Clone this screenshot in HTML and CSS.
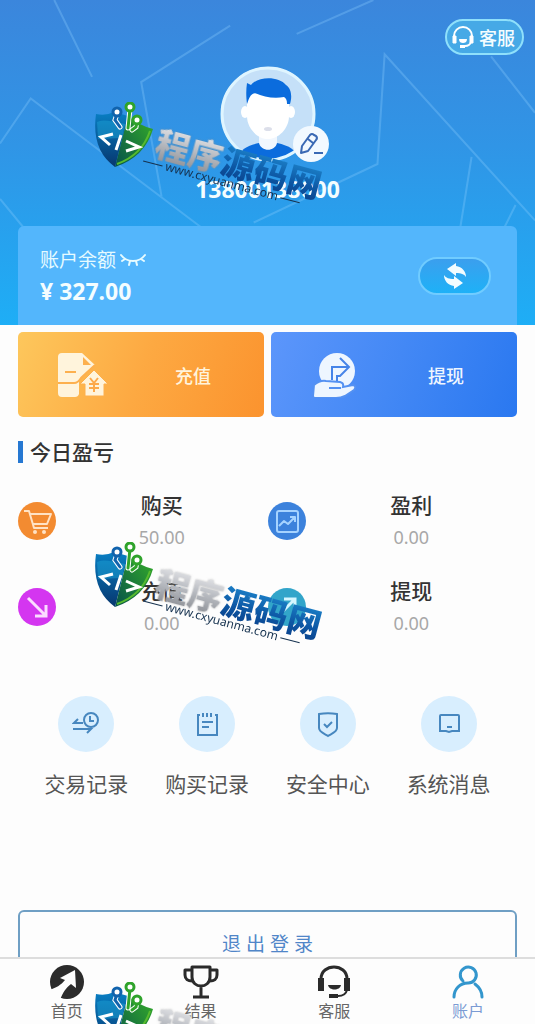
FILE: index.html
```html
<!DOCTYPE html>
<html lang="zh-CN">
<head>
    <meta charset="UTF-8">
    <meta name="viewport" content="width=device-width, initial-scale=1.0">
    <title>账户</title>
    <link rel="stylesheet" href="styles.css">
</head>
<body>

    <div class="page">

        <!-- Header -->
        <header class="header">
            <svg class="header-lines" viewBox="0 0 523 317" preserveAspectRatio="none" aria-hidden="true">
                <path d="M53 0 90 75M225 25 138 80 158 192M365 0 290 33M0 140 30 96 205 228M523 215 376 53 369 160 248 217M461 153 449 228M0 194 28 228M480 55 523 110M504 200 490 228"/>
            </svg>

            <div class="header-top">
                <a class="service-link" href="#service">
                    <svg width="24" height="24" viewBox="0 0 24 24" fill="none" stroke="#fff" stroke-width="2" aria-hidden="true">
                        <path d="M3 14V11a9 9 0 0 1 18 0v3M20 17c-1 3-3 4-6 4"/>
                        <path d="M2 11h3v7H2zM19 11h3v7h-3z" fill="#fff" stroke-width="1"/>
                        <path d="M8 14h8c0 3-2 4-4 4s-4-1-4-4zM9 20h5v3H9z" fill="#fff" stroke="none"/>
                    </svg>
                    客服
                </a>
            </div>

            <div class="avatar">
                <svg class="avatar-picture" viewBox="0 0 96 96" aria-hidden="true">
                    <defs>
                        <clipPath id="avatarClip"><circle cx="48" cy="48" r="46"/></clipPath>
                    </defs>
                    <circle cx="48" cy="48" r="47" fill="#c5e0f8"/>
                    <g clip-path="url(#avatarClip)">
                        <path d="M18 96c0-12 8-16 21-19h18c13 3 21 7 21 19z" fill="#0b6cdd"/>
                        <path d="M39 64h18v13c-2 9-16 9-18 0z" fill="#f1f7fe"/>
                        <ellipse cx="25" cy="46" rx="4" ry="6" fill="#fff"/>
                        <ellipse cx="71" cy="46" rx="4" ry="6" fill="#fff"/>
                        <path d="M27 28h42v22c0 13-11 23-21 23S27 63 27 50z" fill="#fff"/>
                        <path d="M27 38c-1-8-1-14 0-21l4 2c7-9 28-9 35 0 6 4 6 13 4 19h-3c0-4-1-6-3-7-10 2-20 0-29-4-5 1-6 6-8 11z" fill="#0b6cdd"/>
                        <ellipse cx="48" cy="63" rx="4" ry="2" fill="#dcdfea"/>
                    </g>
                    <circle cx="48" cy="48" r="46" fill="none" stroke="#dff5ff" stroke-width="3"/>
                </svg>
                <button class="avatar-edit" type="button" aria-label="编辑头像">
                    <svg width="26" height="26" viewBox="0 0 26 26" fill="none" stroke="#3a69b4" stroke-width="2" stroke-linejoin="round" aria-hidden="true">
                        <path d="M3 22 4 15 12 4q2-2 4 0l2 1q2 2 0 4l-8 11zM10 8l5 4M16 22h9"/>
                    </svg>
                </button>
            </div>

            <p class="phone">13800138000</p>

            <div class="balance">
                <div>
                    <p class="balance-label">
                        账户余额
                        <button class="eye-button" type="button" aria-label="显示余额">
                            <svg width="26" height="14" viewBox="0 0 26 14" fill="none" stroke="#e6fbff" stroke-width="2" stroke-linecap="round" aria-hidden="true">
                                <path d="M1 2c6 8 18 8 24 0M5 6 2 8M10 8l-1 4M16 8l1 4M21 6l3 2"/>
                            </svg>
                        </button>
                    </p>
                    <p class="balance-amount">¥ 327.00</p>
                </div>
                <button class="refresh-button" type="button" aria-label="刷新余额">
                    <svg width="26" height="28" viewBox="0 0 26 28" fill="#f2fcff" aria-hidden="true">
                        <path d="M5 7 14 1v3c6 1 10 5 10 11-2-3-5-4-10-4v3z"/>
                        <path d="M21 21 12 27v-3C6 23 2 19 2 13c2 3 5 4 10 4v-3z"/>
                    </svg>
                </button>
            </div>
        </header>

        <main class="content">
            <!-- Recharge and withdraw -->
            <div class="actions">
                <a class="action action-recharge" href="#recharge">
                    <svg width="50" height="46" viewBox="0 0 50 46" aria-hidden="true">
                        <path d="M5 1h20l13 12-16 15v14q-1 3-4 3H5q-4 0-4-4V5q0-4 4-4z" fill="#fff4dc"/>
                        <path d="M26 5v8h8z" fill="#fdb04e"/>
                        <path d="M8 20h11M1 31h16q4 0 7-5L38 13" fill="none" stroke="#fdb04e" stroke-width="2"/>
                        <path d="M37 18 51 32h-4v12H28V32h-5z" fill="#fff4dc" stroke="#fdb04e"/>
                        <path d="M33 26l4 5 4-5M32 32h10M32 36h10M37 31v9" fill="none" stroke="#fda94a" stroke-width="2"/>
                    </svg>
                    充值
                </a>
                <a class="action action-withdraw" href="#withdraw">
                    <svg width="50" height="46" viewBox="0 0 50 46" aria-hidden="true">
                        <circle cx="27" cy="19" r="18" fill="#eef6ff"/>
                        <path d="M22 28V15h17M30 6l9 9-9 9h-3v6" fill="none" stroke="#4684e8" stroke-width="2"/>
                        <path d="M4 33q6-5 12-4l14 1q4 1 3 5l10-2q4 1 1 5l-9 6q-4 2-9 2H5q-2 0-2-2z" fill="#eef6ff" stroke="#5491f2" stroke-width="2"/>
                        <path d="M19 36h12" stroke="#5491f2" stroke-width="2"/>
                    </svg>
                    提现
                </a>
            </div>

            <!-- Today's profit and loss -->
            <h2 class="section-title">今日盈亏</h2>
            <div class="stats">
                <div class="stat">
                    <svg class="stat-icon" viewBox="0 0 38 38" aria-hidden="true">
                        <circle cx="19" cy="19" r="19" fill="#f38b31"/>
                        <g fill="none" stroke="#ffe2c4" stroke-width="2" stroke-linejoin="round">
                            <path d="M6 9h5l5 17h14M12 12h21l-4 10H15"/>
                        </g>
                        <circle cx="17" cy="30" r="2" fill="#ffe2c4"/>
                        <circle cx="26" cy="30" r="2" fill="#ffe2c4"/>
                    </svg>
                    <div class="stat-text">
                        <p class="stat-name">购买</p>
                        <p class="stat-value">50.00</p>
                    </div>
                </div>
                <div class="stat">
                    <svg class="stat-icon" viewBox="0 0 38 38" aria-hidden="true">
                        <circle cx="19" cy="19" r="19" fill="#3c82dc"/>
                        <g fill="none" stroke="#a6d3ff" stroke-width="2" stroke-linejoin="round">
                            <rect x="9" y="9" width="21" height="21" rx="2"/>
                            <path d="M11 24l5-5 4 3 6-6M22 15h5v5"/>
                        </g>
                    </svg>
                    <div class="stat-text">
                        <p class="stat-name">盈利</p>
                        <p class="stat-value">0.00</p>
                    </div>
                </div>
                <div class="stat">
                    <svg class="stat-icon" viewBox="0 0 38 38" aria-hidden="true">
                        <circle cx="19" cy="19" r="19" fill="#d436f0"/>
                        <path d="M10 10 27 27M28 17v11H17" fill="none" stroke="#fbdcff" stroke-width="3"/>
                    </svg>
                    <div class="stat-text">
                        <p class="stat-name">充值</p>
                        <p class="stat-value">0.00</p>
                    </div>
                </div>
                <div class="stat">
                    <svg class="stat-icon" viewBox="0 0 38 38" aria-hidden="true">
                        <circle cx="19" cy="19" r="19" fill="#32a5ca"/>
                        <path d="M11 27 27 11M16 11h11v11" fill="none" stroke="#d5f6ff" stroke-width="3"/>
                    </svg>
                    <div class="stat-text">
                        <p class="stat-name">提现</p>
                        <p class="stat-value">0.00</p>
                    </div>
                </div>
            </div>

            <!-- Shortcuts -->
            <nav class="shortcuts">
                <a class="shortcut" href="#trades">
                    <span class="shortcut-icon">
                        <svg width="28" height="28" viewBox="0 0 28 28" aria-hidden="true">
                            <circle cx="19" cy="10" r="7"/>
                            <path d="M18 6v5h4M11 13H2l4-4M1 19h18l-4 4"/>
                        </svg>
                    </span>
                    交易记录
                </a>
                <a class="shortcut" href="#purchases">
                    <span class="shortcut-icon">
                        <svg width="28" height="28" viewBox="0 0 28 28" aria-hidden="true">
                            <path d="M7 5H5v20h19V5h-2M10 3v4M14 3v4M18 3v4M9 12h11M9 17h7"/>
                        </svg>
                    </span>
                    购买记录
                </a>
                <a class="shortcut" href="#security">
                    <span class="shortcut-icon">
                        <svg width="28" height="28" viewBox="0 0 28 28" aria-hidden="true">
                            <path d="M5 4c6-1 12-1 18 0v14c0 4-6 6-9 8-3-2-9-4-9-8zM10 14l3 3 5-5"/>
                        </svg>
                    </span>
                    安全中心
                </a>
                <a class="shortcut" href="#messages">
                    <span class="shortcut-icon">
                        <svg width="28" height="28" viewBox="0 0 28 28" aria-hidden="true">
                            <path d="M6 5h17q1 0 1 1v15h-7l-3 1-3-1H5V6q0-1 1-1zM12 17h5"/>
                        </svg>
                    </span>
                    系统消息
                </a>
            </nav>

            <button class="logout-button" type="button">退 出 登 录</button>
        </main>

        <!-- Bottom tab bar -->
        <nav class="tabbar">
            <a class="tab" href="#home">
                <svg width="36" height="36" viewBox="0 0 36 36" aria-hidden="true">
                    <circle cx="18" cy="18" r="17" fill="#2b2b2b"/>
                    <path d="M26 6 27 24 22 20C17 24 14 28 11 36L0 26C7 24 12 21 16 16L11 14z" fill="#fdfdfd"/>
                </svg>
                首页
            </a>
            <a class="tab" href="#result">
                <svg width="36" height="36" viewBox="0 0 36 36" fill="none" stroke="#2b2b2b" stroke-width="3" stroke-linejoin="round" aria-hidden="true">
                    <path d="M9 3h18v10c0 12-18 12-18 0zM9 6H2v5c0 4 3 6 7 6M27 6h7v5c0 4-3 6-7 6M18 22v10M10 33h16"/>
                </svg>
                结果
            </a>
            <a class="tab" href="#service">
                <svg width="36" height="36" viewBox="0 0 36 36" fill="none" stroke="#2b2b2b" stroke-width="3" aria-hidden="true">
                    <path d="M5 15C5-1 31-1 31 15"/>
                    <path d="M31 26c-1 4-5 6-9 6" stroke-width="2"/>
                    <path d="M3 15h4v11H3zM29 15h4v11h-4zM14 31h7v2h-7z" fill="#2b2b2b" stroke-width="2"/>
                    <path d="M12 21h13c-1 6-12 6-13 0z" fill="#2b2b2b" stroke="none"/>
                </svg>
                客服
            </a>
            <a class="tab tab-active" href="#account">
                <svg width="36" height="36" viewBox="0 0 36 36" fill="none" stroke="#3396cd" stroke-width="3" stroke-linecap="round" aria-hidden="true">
                    <path d="M13 17a8 8 0 1 1 5 2C10 19 4 25 4 33M25 20c4 3 7 7 7 13"/>
                </svg>
                账户
            </a>
        </nav>

        <!-- Repeated site mark over the whole page -->
        <div class="watermarks">
            <div class="watermark">
                <svg class="watermark-shield" viewBox="0 0 60 66" aria-hidden="true">
                    <defs>
                        <linearGradient id="shieldBlue" x1="0" y1="0" x2="0" y2="1">
                            <stop offset="0" stop-color="#087fc4"/>
                            <stop offset="1" stop-color="#07366e"/>
                        </linearGradient>
                        <linearGradient id="shieldGreen" x1="1" y1="0" x2="0" y2="1">
                            <stop offset="0" stop-color="#35ad28"/>
                            <stop offset="1" stop-color="#06504c"/>
                        </linearGradient>
                    </defs>
                    <g id="shield">
                        <path d="M2 12Q12 14 20 10L34 14 21 65Q-3 48 2 12z" fill="url(#shieldBlue)"/>
                        <path d="M34 14Q46 24 59 27 51 55 21 65z" fill="url(#shieldGreen)"/>
                        <path d="M3 20Q8 16 31 22L28 36 4 37z" fill="#1ba0d4" opacity=".5"/>
                        <path d="M56 29Q48 53 23 62" fill="none" stroke="#58bb2e" stroke-width="2"/>
                        <g fill="none" stroke="#fff" stroke-width="5" stroke-linecap="round">
                            <path d="M23 12 21 18 26 25M36 7 34 26M43 20 42 25 38 28"/>
                        </g>
                        <g fill="none" stroke-width="3" stroke-linecap="round">
                            <path d="M23 12 21 18 26 25" stroke="#1163ad"/>
                            <path d="M36 7 34 26M43 20 42 25 38 28" stroke="#2fa32b"/>
                        </g>
                        <g fill="#fff" stroke-width="3">
                            <circle cx="23" cy="10" r="4" stroke="#1163ad"/>
                            <circle cx="36" cy="5" r="4" stroke="#2fa32b"/>
                            <circle cx="43" cy="18" r="4" stroke="#2fa32b"/>
                        </g>
                        <path d="M19 32 7 35 16 43M27 33 22 48M32 39 45 45 32 49" fill="none" stroke="#fff" stroke-width="3"/>
                    </g>
                </svg>
                <div class="watermark-text">
                    <p class="watermark-name"><span class="silver">程序</span><span class="blue">源码网</span></p>
                    <p class="watermark-url">www.cxyuanma.com</p>
                </div>
            </div>
            <div class="watermark">
                <svg class="watermark-shield" viewBox="0 0 60 66" aria-hidden="true"><use href="#shield"/></svg>
                <div class="watermark-text">
                    <p class="watermark-name"><span class="silver">程序</span><span class="blue">源码网</span></p>
                    <p class="watermark-url">www.cxyuanma.com</p>
                </div>
            </div>
            <div class="watermark">
                <svg class="watermark-shield" viewBox="0 0 60 66" aria-hidden="true"><use href="#shield"/></svg>
                <div class="watermark-text">
                    <p class="watermark-name"><span class="silver">程序</span></p>
                    <p class="watermark-url"></p>
                </div>
            </div>
        </div>

    </div>

</body>
</html>
```

FILE: styles.css
```css
/* Global Styles */
* {
    margin: 0;
    padding: 0;
    box-sizing: border-box;
}

body {
    background: #fdfdfd;
    color: #333333;
    font-family: "Noto Sans", "Noto Sans CJK SC", sans-serif;
    font-size: 18px;
}

a {
    color: inherit;
    text-decoration: none;
}

button {
    border: none;
    background: none;
    font: inherit;
    color: inherit;
    cursor: pointer;
}

svg {
    display: block;
    flex-shrink: 0;
}

.page {
    position: relative;
    min-height: 100vh;
}

/* HEADER */
.header {
    position: relative;
    padding: 19px 18px 0;
    background: linear-gradient(#3b86dc, #3095e6 45%, #1eaef6);
    color: #f4fdff;
}

.header-lines {
    position: absolute;
    inset: 0;
    width: 100%;
    height: 100%;
    fill: none;
    stroke: #8fd0ff;
    stroke-width: 2;
    opacity: 0.3;
}

.header-top {
    position: relative;
    display: flex;
    justify-content: flex-end;
    margin-right: -7px;
}

.service-link {
    display: flex;
    align-items: center;
    gap: 4px;
    height: 36px;
    padding: 0 7px 0 4px;
    border: 2px solid #8fe0fb;
    border-radius: 18px;
    background: #46a9e6;
    font-weight: 500;
}

.avatar {
    position: relative;
    width: 96px;
    margin: 11px auto 0;
}

.avatar-picture {
    width: 96px;
    height: 96px;
}

.avatar-edit {
    position: absolute;
    right: -13px;
    bottom: 0;
    display: flex;
    align-items: center;
    justify-content: center;
    width: 36px;
    height: 36px;
    border-radius: 50%;
    background: #f2f9ff;
}

.phone {
    position: relative;
    margin: 12px 0 22px;
    font-size: 23px;
    font-weight: 700;
    line-height: 30px;
    text-align: center;
}

/* BALANCE */
.balance {
    position: relative;
    display: flex;
    align-items: center;
    justify-content: space-between;
    height: 99px;
    padding: 0 26px 0 22px;
    border-radius: 6px 6px 0 0;
    background: #53b6fc;
}

.balance-label {
    display: flex;
    align-items: center;
    gap: 4px;
    font-size: 19px;
    line-height: 30px;
    color: #e6fbff;
}

.balance-amount {
    font-size: 23px;
    font-weight: 700;
    line-height: 32px;
}

.refresh-button {
    display: flex;
    align-items: center;
    justify-content: center;
    width: 73px;
    height: 38px;
    border: 2px solid #70ccff;
    border-radius: 19px;
    background: linear-gradient(#3b9fee, #1eb1f7);
}

/* CONTENT */
.content {
    padding: 7px 18px 0;
}

.actions {
    display: grid;
    grid-template-columns: 1fr 1fr;
    gap: 7px;
}

.action {
    display: flex;
    align-items: center;
    justify-content: space-between;
    height: 85px;
    padding: 0 53px 0 39px;
    border-radius: 5px;
    font-weight: 500;
}

.action-recharge {
    background: linear-gradient(110deg, #fdc75c, #fda942 50%, #fb932e);
    color: #fff4dc;
}

.action-withdraw {
    background: linear-gradient(110deg, #5c96fb, #4388f5 50%, #2a78f0);
    color: #eef6ff;
}

.section-title {
    display: flex;
    align-items: center;
    gap: 7px;
    margin-top: 20px;
    font-size: 21px;
    font-weight: 500;
    line-height: 30px;
}

.section-title::before {
    content: "";
    width: 5px;
    height: 22px;
    background: #2678d2;
}

/* STATS */
.stats {
    display: grid;
    grid-template-columns: 1fr 1fr;
    row-gap: 22px;
    margin-top: 22px;
}

.stat {
    display: flex;
    align-items: center;
    height: 64px;
}

.stat-icon {
    width: 38px;
    height: 38px;
}

.stat-text {
    flex: 1;
    text-align: center;
}

.stat-name {
    font-size: 21px;
    font-weight: 500;
    line-height: 32px;
}

.stat-value {
    line-height: 32px;
    color: #a8a8a8;
}

/* SHORTCUTS */
.shortcuts {
    display: grid;
    grid-template-columns: repeat(4, 1fr);
    margin: 57px 8px 0;
}

.shortcut {
    display: flex;
    flex-direction: column;
    align-items: center;
    gap: 16px;
    font-size: 21px;
    line-height: 32px;
    white-space: nowrap;
    color: #555555;
}

.shortcut-icon {
    display: flex;
    align-items: center;
    justify-content: center;
    width: 56px;
    height: 56px;
    border-radius: 50%;
    background: #d8eefe;
}

.shortcut-icon svg {
    fill: none;
    stroke: #4787bf;
    stroke-width: 2;
}

/* LOGOUT */
.logout-button {
    width: 100%;
    height: 66px;
    margin-top: 110px;
    border: 2px solid #6f9fc4;
    border-radius: 6px;
    font-size: 19px;
    color: #5086c8;
}

/* TAB BAR */
.tabbar {
    position: fixed;
    left: 0;
    right: 0;
    bottom: 0;
    display: grid;
    grid-template-columns: repeat(4, 1fr);
    height: 67px;
    padding-top: 5px;
    border-top: 2px solid #dddddd;
    background: #fdfdfd;
}

.tab {
    display: flex;
    flex-direction: column;
    align-items: center;
    font-size: 16px;
    line-height: 22px;
    color: #666666;
}

.tab-active {
    color: #7b9bd4;
}

/* WATERMARKS */
.watermarks {
    position: absolute;
    inset: 0;
    z-index: 10;
    padding: 102px 0 0 94px;
    overflow: hidden;
    pointer-events: none;
}

.watermark {
    display: flex;
    align-items: flex-start;
    height: 440px;
}

.watermark-shield {
    width: 60px;
    height: 66px;
}

.watermark-text {
    width: 170px;
    margin: 46px 0 0 -2px;
    transform: rotate(15deg);
}

.watermark-name {
    font-family: "Noto Sans CJK SC", sans-serif;
    font-size: 34px;
    font-weight: 900;
    line-height: 30px;
    white-space: nowrap;
}

.silver,
.blue {
    background-clip: text;
    -webkit-background-clip: text;
    color: transparent;
}

.silver {
    background-image: linear-gradient(#f4f4f6, #b9bcc2 50%, #85888e);
    filter: drop-shadow(0 0 1px #88888888);
}

.blue {
    background-image: linear-gradient(#2190d6, #0d57a4 60%, #0a3d86);
}

.watermark-url {
    display: flex;
    align-items: center;
    gap: 3px;
    height: 14px;
    margin-left: -8px;
    font-size: 12px;
    line-height: 14px;
    color: #16324f;
}

.watermark-url::before,
.watermark-url::after {
    content: "";
    width: 20px;
    height: 1px;
    background: #16324f;
}
```
